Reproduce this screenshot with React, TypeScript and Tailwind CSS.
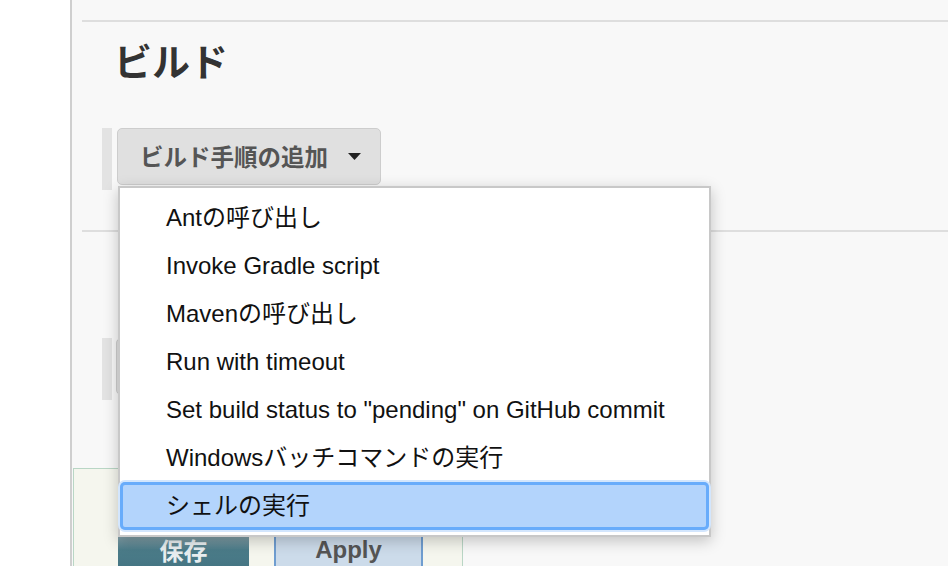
import React from "react";

const items = [
  "Antの呼び出し",
  "Invoke Gradle script",
  "Mavenの呼び出し",
  "Run with timeout",
  'Set build status to "pending" on GitHub commit',
  "Windowsバッチコマンドの実行",
  "シェルの実行",
];

const Caret = () => (
  <svg width="13" height="7" viewBox="0 0 13 7" className="ml-[20px]">
    <polygon points="0,0 13,0 6.5,7" fill="#222" />
  </svg>
);

const App = () => {
  return (
    <div className="relative flex h-[566px] w-[948px] overflow-hidden font-['Liberation_Sans','Noto_Sans_CJK_JP',sans-serif]">
      {/* side column */}
      <div className="w-[72px] shrink-0 border-r-2 border-[#cfcfcf] bg-white" />

      <div className="flex flex-1 flex-col bg-[#f8f8f8]">
        <div className="h-[20px] shrink-0" />
        <div className="ml-[10px] border-t-2 border-[#dedede]">
          <h2 className="mt-[15px] pl-[32px] text-[38px] font-bold leading-[45px] text-[#333] font-['Noto_Sans_CJK_JP',sans-serif]">
            ビルド
          </h2>

          <div className="mt-[46px] flex items-start">
            <div className="ml-[20px] h-[62px] w-[10px] bg-[#e3e3e3]" />
            <button className="ml-[5px] flex h-[57px] w-[264px] items-center rounded-[5px] border border-[#cdcdcd] bg-[#e0e0e0] pl-[22px] text-[23.5px] font-bold text-[#555] font-['Noto_Sans_CJK_JP',sans-serif]">
              ビルド手順の追加
              <Caret />
            </button>
          </div>
        </div>

        <div className="ml-[10px] mt-[40px] border-t-2 border-[#dedede]">
          <div className="mt-[106px] flex items-start">
            <div className="ml-[20px] h-[62px] w-[10px] bg-[#e3e3e3]" />
            <div className="ml-[4px] h-[57px] w-[200px] rounded-[5px] border border-[#cdcdcd] bg-[#e0e0e0]" />
          </div>
        </div>

        {/* bottom bar */}
        <div className="ml-[1px] mt-[68px] flex h-[200px] w-[390px] shrink-0 items-start border-x border-t border-[#b9d6c5] bg-[#f5f6ee] pl-[44px] pt-[64px]">
          <button className="h-[34px] w-[131px] bg-gradient-to-b from-[#8fa7ae] via-[#4b7c89] to-[#457583] text-[24px] font-bold leading-[34px] text-[#e8eef0] font-['Noto_Sans_CJK_JP',sans-serif]">
            保存
          </button>
          <button className="ml-[25px] h-[34px] w-[149px] border-x-2 border-[#6f9dd0] bg-[#ccdbea] text-[24px] font-bold leading-[34px] text-[#555]">
            Apply
          </button>
        </div>
      </div>

      {/* dropdown menu */}
      <div className="absolute left-[118px] top-[186px] h-[351px] w-[593px] border-2 border-[#c8c8c8] bg-white pt-[6px] shadow-[0_4px_14px_rgba(0,0,0,0.22)]">
        {items.map((label, i) => {
          const active = i === items.length - 1;
          return (
            <div
              key={label}
              className={
                active
                  ? "flex h-[48px] items-center rounded-[5px] bg-[#b3d4fc] pl-[46px] text-[24px] text-[#111] shadow-[inset_0_0_0_3px_#68acfb,0_0_0_2px_#d3e6fd]"
                  : "flex h-[48px] items-center pl-[46px] text-[24px] text-[#111]"
              }
            >
              {label}
            </div>
          );
        })}
      </div>
    </div>
  );
};

export default App;
